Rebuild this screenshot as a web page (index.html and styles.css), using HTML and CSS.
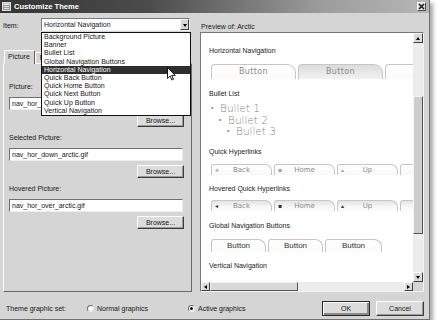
FILE: index.html
```html
<!DOCTYPE html>
<html lang="en">
<head>
    <meta charset="UTF-8">
    <title>Customize Theme</title>
    <link rel="stylesheet" href="styles.css">
</head>
<body>
    <div class="dialog">
        <div class="titlebar">
            <svg class="appicon" width="9" height="9" viewBox="0 0 9 9">
                <rect x="0.5" y="0.5" width="8" height="8" fill="#9a9a9a" stroke="#e0e0e0"/>
                <rect x="1.5" y="1.5" width="6" height="1.5" fill="#f2f2f2"/>
                <path d="M2 4.5h5M2 6.5h5" stroke="#f2f2f2" stroke-width="0.8"/>
            </svg>
            <span class="title">Customize Theme</span>
            <span class="close">
                <svg width="7" height="7" viewBox="0 0 7 7"><path d="M1 1l5 5M6 1l-5 5" stroke="#111" stroke-width="1.4"/></svg>
            </span>
        </div>

        <div class="main">
            <!-- kolom kiri -->
            <div class="left">
                <div class="item-row">
                    <span class="item-label">Item:</span>
                    <div class="combo">
                        <span>Horizontal Navigation</span>
                        <span class="combo-btn"><i class="tri-down"></i></span>
                    </div>
                </div>
                <div class="tabs">
                    <span class="tab active">Picture</span>
                    <span class="tab">Font</span>
                </div>
                <div class="panel">
                    <div class="group">
                        <div class="lbl">Picture:</div>
                        <div class="field">nav_hor_arctic.gif</div>
                        <div class="btn browse">Browse...</div>
                    </div>
                    <div class="group">
                        <div class="lbl">Selected Picture:</div>
                        <div class="field">nav_hor_down_arctic.gif</div>
                        <div class="btn browse">Browse...</div>
                    </div>
                    <div class="group">
                        <div class="lbl">Hovered Picture:</div>
                        <div class="field">nav_hor_over_arctic.gif</div>
                        <div class="btn browse">Browse...</div>
                    </div>
                </div>
            </div>

            <!-- kolom kanan: preview -->
            <div class="right">
                <div class="preview-label">Preview of: Arctic</div>
                <div class="preview">
                    <div class="view">
                        <div class="sect">Horizontal Navigation</div>
                        <div class="row row-hnav">
                            <span class="ntab">Button</span>
                            <span class="ntab hover">Button</span>
                            <span class="ntab"></span>
                        </div>

                        <div class="sect sect-bullets">Bullet List</div>
                        <ul class="bullets">
                            <li class="lvl1">Bullet 1</li>
                            <li class="lvl2">Bullet 2</li>
                            <li class="lvl3">Bullet 3</li>
                        </ul>

                        <div class="sect">Quick Hyperlinks</div>
                        <div class="row row-quick">
                            <span class="qtab"><i class="qi">&#9666;</i><b>Back</b></span>
                            <span class="qtab"><i class="qi">&#9642;</i><b>Home</b></span>
                            <span class="qtab"><i class="qi">&#9652;</i><b>Up</b></span>
                            <span class="qtab"><i class="qi"></i><b></b></span>
                        </div>

                        <div class="sect">Hovered Quick Hyperlinks</div>
                        <div class="row row-quick hovered">
                            <span class="qtab"><i class="qi">&#9666;</i><b>Back</b></span>
                            <span class="qtab"><i class="qi">&#9642;</i><b>Home</b></span>
                            <span class="qtab"><i class="qi">&#9652;</i><b>Up</b></span>
                            <span class="qtab"><i class="qi"></i><b></b></span>
                        </div>

                        <div class="sect">Global Navigation Buttons</div>
                        <div class="row row-global">
                            <span class="gtab">Button</span>
                            <span class="gtab">Button</span>
                            <span class="gtab">Button</span>
                        </div>

                        <div class="sect">Vertical Navigation</div>
                    </div>
                    <div class="vscroll">
                        <span class="sbtn"><i class="tri-up"></i></span>
                        <span class="track"><span class="vthumb"></span></span>
                        <span class="sbtn"><i class="tri-down"></i></span>
                    </div>
                    <div class="hscroll">
                        <span class="sbtn"><i class="tri-left"></i></span>
                        <span class="track"><span class="hthumb"></span></span>
                        <span class="sbtn"><i class="tri-right"></i></span>
                    </div>
                    <div class="corner"></div>
                </div>
            </div>
        </div>

        <div class="footer">
            <span class="set-label">Theme graphic set:</span>
            <span class="radio-opt opt1"><i class="radio"></i>Normal graphics</span>
            <span class="radio-opt"><i class="radio on"></i>Active graphics</span>
            <div class="footer-btns">
                <span class="btn ok">OK</span>
                <span class="btn cancel">Cancel</span>
            </div>
        </div>

        <!-- dropdown terbuka di atas form -->
        <ul class="dropdown">
            <li>Background Picture</li>
            <li>Banner</li>
            <li>Bullet List</li>
            <li>Global Navigation Buttons</li>
            <li class="sel">Horizontal Navigation</li>
            <li>Quick Back Button</li>
            <li>Quick Home Button</li>
            <li>Quick Next Button</li>
            <li>Quick Up Button</li>
            <li>Vertical Navigation</li>
        </ul>
        <svg class="cursor" width="9" height="14" viewBox="0 0 9 14">
            <path d="M0.5 0.5v11l2.6-2.5 1.8 4 1.6-0.7-1.8-3.9h3.6z" fill="#fff" stroke="#000" stroke-width="0.9"/>
        </svg>
    </div>
</body>
</html>
```

FILE: styles.css
```css
* {
    box-sizing: border-box;
}
body {
    margin: 0;
    background: #ffffff;
    font-family: "Liberation Sans", Arial, sans-serif;
    font-size: 7px;
    color: #151515;
}
.dialog {
    position: relative;
    width: 430px;
    height: 320px;
    background: #d5d5d5;
    border-right: 1px solid #707070;
    border-bottom: 1px solid #707070;
    box-shadow: 3px 3px 4px rgba(0, 0, 0, 0.35);
    display: flex;
    flex-direction: column;
}
.titlebar {
    height: 13px;
    display: flex;
    align-items: center;
    padding: 0 2px;
    background: linear-gradient(to right, #353535, #4c4c4c 35%, #9c9c9c 75%, #b6b6b6);
}
.appicon {
    display: block;
    margin-right: 3px;
}
.title {
    color: #fff;
    font-weight: bold;
    font-size: 7.6px;
}
.close {
    margin-left: auto;
    margin-right: 1px;
    width: 9px;
    height: 9px;
    background: #dcdcdc;
    border: 1px solid;
    border-color: #fff #505050 #505050 #fff;
    display: flex;
    align-items: center;
    justify-content: center;
}
.close svg {
    display: block;
}

/* layout utama */
.main {
    display: flex;
    gap: 8px;
    padding: 0 5px 0 3px;
    height: 279px;
}
.left {
    width: 189px;
    display: flex;
    flex-direction: column;
}
.right {
    width: 224px;
    display: flex;
    flex-direction: column;
}
.item-row {
    margin-top: 5px;
    height: 13px;
    display: flex;
    align-items: center;
}
.item-label {
    width: 38px;
    padding-top: 2px;
}
.combo {
    width: 149px;
    height: 13px;
    background: #fff;
    border: 1px solid;
    border-color: #7a7a7a #f0f0f0 #f0f0f0 #7a7a7a;
    display: flex;
    align-items: center;
    padding-left: 2px;
}
.combo-btn {
    margin-left: auto;
    width: 9px;
    height: 11px;
    background: #d8d8d8;
    border: 1px solid;
    border-color: #f4f4f4 #404040 #404040 #f4f4f4;
    display: flex;
    align-items: center;
    justify-content: center;
}
.tri-down, .tri-up, .tri-left, .tri-right {
    display: block;
    width: 0;
    height: 0;
    border: 2px solid transparent;
}
.tri-down {
    border-top: 3px solid #000;
    border-bottom: 0;
    margin-top: 1px;
}
.tri-up {
    border-bottom: 3px solid #000;
    border-top: 0;
}
.tri-left {
    border-right: 3px solid #000;
    border-left: 0;
}
.tri-right {
    border-left: 3px solid #000;
    border-right: 0;
}
.tabs {
    margin-top: 19px;
    height: 13px;
    display: flex;
    align-items: flex-end;
    padding-left: 1px;
    position: relative;
    z-index: 1;
}
.tab {
    height: 11px;
    line-height: 10px;
    padding: 0 4px;
    border: 1px solid;
    border-color: #fff #606060 transparent #fff;
    border-bottom: 0;
    background: #d5d5d5;
    border-radius: 2px 2px 0 0;
}
.tab.active {
    height: 14px;
    margin-bottom: -1px;
    line-height: 12px;
    padding: 0 4px 0 3px;
}
.panel {
    flex: 1;
    border: 1px solid;
    border-color: #fafafa #6a6a6a #6a6a6a #fafafa;
    padding: 19px 0 0 5px;
}
.group {
    display: flex;
    flex-direction: column;
    margin-bottom: 7px;
}
.lbl {
    height: 8px;
    line-height: 8px;
    margin-bottom: 6px;
}
.field {
    width: 174px;
    height: 13px;
    line-height: 11px;
    background: #fff;
    border: 1px solid;
    border-color: #707070 #ededed #ededed #707070;
    padding-left: 2px;
}
.btn {
    background: #dcdcdc;
    border: 1px solid;
    border-color: #fbfbfb #3c3c3c #3c3c3c #fbfbfb;
    box-shadow: inset -1px -1px #9a9a9a;
    text-align: center;
}
.browse {
    align-self: flex-start;
    margin: 4px 0 0 128px;
    width: 47px;
    height: 13px;
    line-height: 11px;
}

/* preview */
.preview-label {
    margin-top: 9px;
    height: 9px;
    line-height: 9px;
    padding-left: 1px;
}
.preview {
    margin-top: 1px;
    flex: 1;
    background: #fff;
    border: 1px solid;
    border-color: #777 #f4f4f4 #f4f4f4 #777;
    display: grid;
    grid-template-columns: 1fr 10px;
    grid-template-rows: 1fr 9px;
    overflow: hidden;
}
.view {
    overflow: hidden;
    padding: 14px 0 0 8px;
    white-space: nowrap;
}
.sect {
    height: 8px;
    line-height: 8px;
    color: #1a1a1a;
}
.row {
    display: flex;
    gap: 2px;
    margin-left: 2px;
}
.row-hnav {
    margin-top: 9px;
    margin-bottom: 11px;
}
.ntab {
    flex-shrink: 0;
    width: 85px;
    height: 15px;
    line-height: 14px;
    border: 1px solid #c6c6c6;
    border-bottom: 0;
    border-radius: 4px 9px 0 0;
    background: linear-gradient(#fff, #fbfbfb);
    text-align: center;
    font-family: "DejaVu Sans", Verdana, sans-serif;
    font-size: 8px;
    letter-spacing: 0.4px;
    color: #8a8a8a;
}
.ntab.hover {
    background: linear-gradient(#dcdcdc, #f2f2f2);
}
.bullets {
    list-style: none;
    margin: 5px 0 10px;
    padding: 0;
    font-family: "DejaVu Sans", Verdana, sans-serif;
    font-weight: 200;
    font-size: 10.5px;
    line-height: 11.5px;
    color: #858585;
}
.bullets li::before {
    content: "\2022";
    display: inline-block;
    width: 9px;
    font-size: 7px;
    vertical-align: 2px;
    padding-left: 2px;
}
.bullets .lvl2 {
    padding-left: 8px;
}
.bullets .lvl3 {
    padding-left: 16px;
}
.row-quick {
    margin-top: 8px;
    margin-bottom: 10px;
}
.row-quick.hovered {
    margin-top: 7px;
    margin-bottom: 11px;
}
.qtab {
    flex-shrink: 0;
    width: 61px;
    height: 11px;
    display: flex;
    align-items: center;
    border: 1px solid #c6c6c6;
    border-bottom: 0;
    border-radius: 3px 7px 0 0;
    background: linear-gradient(#fff, #f8f8f8);
    font-family: "DejaVu Sans", Verdana, sans-serif;
    font-size: 7px;
    color: #8a8a8a;
}
.qtab .qi {
    font-style: normal;
    width: 10px;
    padding-left: 3px;
    font-size: 6px;
    color: #a0a0a0;
}
.qtab b {
    font-weight: normal;
    flex: 1;
    text-align: center;
    padding-right: 10px;
}
.hovered .qtab {
    background: linear-gradient(#e4e4e4, #fafafa 70%);
}
.hovered .qtab .qi {
    color: #333;
}
.row-global {
    margin-top: 9px;
    margin-bottom: 10px;
}
.gtab {
    flex-shrink: 0;
    width: 55px;
    height: 13px;
    line-height: 12px;
    border: 1px solid #c6c6c6;
    border-bottom: 0;
    border-radius: 3px 8px 0 0;
    background: linear-gradient(#fff, #fafafa);
    text-align: center;
    font-size: 8px;
    color: #333;
}
.gtab:last-child {
    width: 57px;
}

/* scrollbar */
.vscroll, .hscroll {
    display: flex;
    background: #ececec;
}
.vscroll {
    flex-direction: column;
}
.sbtn {
    flex-shrink: 0;
    width: 10px;
    height: 10px;
    background: #dadada;
    border: 1px solid;
    border-color: #fafafa #404040 #404040 #fafafa;
    display: flex;
    align-items: center;
    justify-content: center;
}
.hscroll .sbtn {
    width: 9px;
    height: 9px;
}
.track {
    flex: 1;
    position: relative;
}
.vthumb {
    position: absolute;
    left: 0;
    right: 0;
    top: 53px;
    height: 138px;
    background: #cdcdcd;
    border: 1px solid;
    border-color: #f4f4f4 #555 #555 #f4f4f4;
}
.hthumb {
    position: absolute;
    top: 0;
    bottom: 0;
    left: 0;
    width: 88px;
    background: #d8d8d8;
    border: 1px solid;
    border-color: #f4f4f4 #555 #555 #f4f4f4;
}
.corner {
    background: #d5d5d5;
}

/* footer */
.footer {
    flex: 1;
    display: flex;
    align-items: center;
    padding: 5px 5px 0 6px;
}
.set-label {
    width: 81px;
}
.radio-opt {
    display: flex;
    align-items: center;
}
.opt1 {
    width: 101px;
}
.radio {
    width: 7px;
    height: 7px;
    border-radius: 50%;
    background: #fff;
    border: 1px solid;
    border-color: #6a6a6a #e6e6e6 #e6e6e6 #6a6a6a;
    margin-right: 3px;
    display: flex;
    align-items: center;
    justify-content: center;
}
.radio.on::after {
    content: "";
    width: 3px;
    height: 3px;
    border-radius: 50%;
    background: #111;
}
.footer-btns {
    margin-left: auto;
    display: flex;
    gap: 6px;
}
.footer-btns .btn {
    width: 48px;
    height: 15px;
    line-height: 13px;
}
.btn.ok {
    border-color: #2a2a2a;
    box-shadow: inset 1px 1px #fafafa, inset -2px -2px #8a8a8a;
}

/* dropdown terbuka */
.dropdown {
    position: absolute;
    left: 41px;
    top: 32px;
    width: 150px;
    height: 84px;
    margin: 0;
    padding: 0;
    list-style: none;
    background: #fff;
    border: 1px solid #111;
    z-index: 5;
}
.dropdown li {
    height: 8.2px;
    line-height: 8.2px;
    padding-left: 2px;
}
.dropdown li.sel {
    background: #2e2e2e;
    color: #fff;
}
.cursor {
    position: absolute;
    left: 167px;
    top: 67px;
    z-index: 6;
}
```
